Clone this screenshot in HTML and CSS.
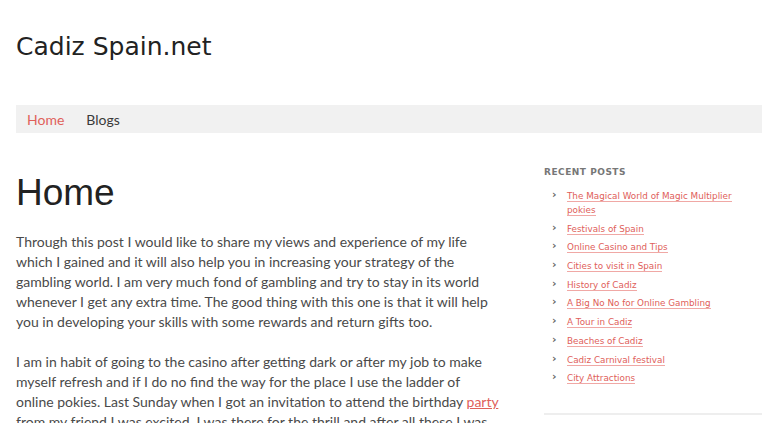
FILE: index.html
```html
<!DOCTYPE html>
<html lang="en">
<head>
    <meta charset="UTF-8">
    <title>Cadiz Spain.net</title>
    <link rel="stylesheet" href="styles.css">
</head>
<body>
    <div class="page">
        <!-- header -->
        <header class="site-header">
            <div class="site-title">Cadiz Spain.net</div>
        </header>

        <!-- main menu -->
        <nav class="main-nav">
            <a href="#" class="current">Home</a>
            <a href="#">Blogs</a>
        </nav>

        <div class="content-wrap">
            <main class="content">
                <h1 class="entry-title">Home</h1>
                <p>Through this post I would like to share my views and experience of my life which I gained and it will also help you in increasing your strategy of the gambling world. I am very much fond of gambling and try to stay in its world whenever I get any extra time. The good thing with this one is that it will help you in developing your skills with some rewards and return gifts too.</p>
                <p>I am in habit of going to the casino after getting dark or after my job to make myself refresh and if I do no find the way for the place I use the ladder of online pokies. Last Sunday when I got an invitation to attend the birthday <a href="#">party</a> from my friend I was excited. I was there for the thrill and after all these I was very happy to get the chance to play again.</p>
            </main>

            <aside class="sidebar">
                <div class="widget">
                    <h3 class="widget-title">Recent Posts</h3>
                    <ul>
                        <li><a href="#">The Magical World of Magic Multiplier pokies</a></li>
                        <li><a href="#">Festivals of Spain</a></li>
                        <li><a href="#">Online Casino and Tips</a></li>
                        <li><a href="#">Cities to visit in Spain</a></li>
                        <li><a href="#">History of Cadiz</a></li>
                        <li><a href="#">A Big No No for Online Gambling</a></li>
                        <li><a href="#">A Tour in Cadiz</a></li>
                        <li><a href="#">Beaches of Cadiz</a></li>
                        <li><a href="#">Cadiz Carnival festival</a></li>
                        <li><a href="#">City Attractions</a></li>
                    </ul>
                </div>
            </aside>
        </div>
    </div>
</body>
</html>
```

FILE: styles.css
```css
body {
    margin: 0;
    background: #fff;
    font-family: Lato, sans-serif;
    color: #4a4a4a;
}

.page {
    width: 746px;
    margin: 0 0 0 16px;
}

.site-header {
    padding: 30px 0 0;
    height: 75px;
}

.site-title {
    font-family: "DejaVu Sans", sans-serif;
    font-size: 25px;
    color: #222;
    line-height: 34px;
}

.main-nav {
    display: flex;
    background: #f1f1f1;
    height: 28px;
    align-items: center;
    padding: 0 11px;
    gap: 22px;
}

.main-nav a {
    font-size: 14px;
    color: #3a3a3a;
    text-decoration: none;
}

.main-nav a.current {
    color: #e0605a;
}

.content-wrap {
    display: flex;
    justify-content: space-between;
}

.content {
    width: 484px;
}

.entry-title {
    font-family: "Liberation Sans", sans-serif;
    font-weight: normal;
    font-size: 37px;
    color: #222;
    margin: 38px 0 17px;
    line-height: 44px;
}

.content p {
    font-size: 14px;
    line-height: 20px;
    margin: 0 0 20px;
}

.content a {
    color: #e0605a;
}

.sidebar {
    width: 218px;
}

.widget {
    padding: 34px 0 23px;
    border-bottom: 2px solid #eee;
}

.widget-title {
    font-family: "DejaVu Sans", sans-serif;
    font-size: 9px;
    font-weight: bold;
    text-transform: uppercase;
    letter-spacing: 0.5px;
    color: #777;
    margin: 0 0 12px;
}

.widget ul {
    list-style: none;
    margin: 0;
    padding: 0 0 0 8px;
}

.widget li {
    font-family: "DejaVu Sans", sans-serif;
    font-size: 8.8px;
    line-height: 14px;
    margin-bottom: 4.7px;
    padding-left: 15px;
    position: relative;
}

.widget li::before {
    content: "\203A";
    position: absolute;
    left: 0;
    top: -1px;
    font-size: 11px;
    font-weight: bold;
    color: #666;
}

.widget li a {
    color: #e0605a;
    text-decoration: none;
    border-bottom: 1px solid #f0a8a5;
}
```
